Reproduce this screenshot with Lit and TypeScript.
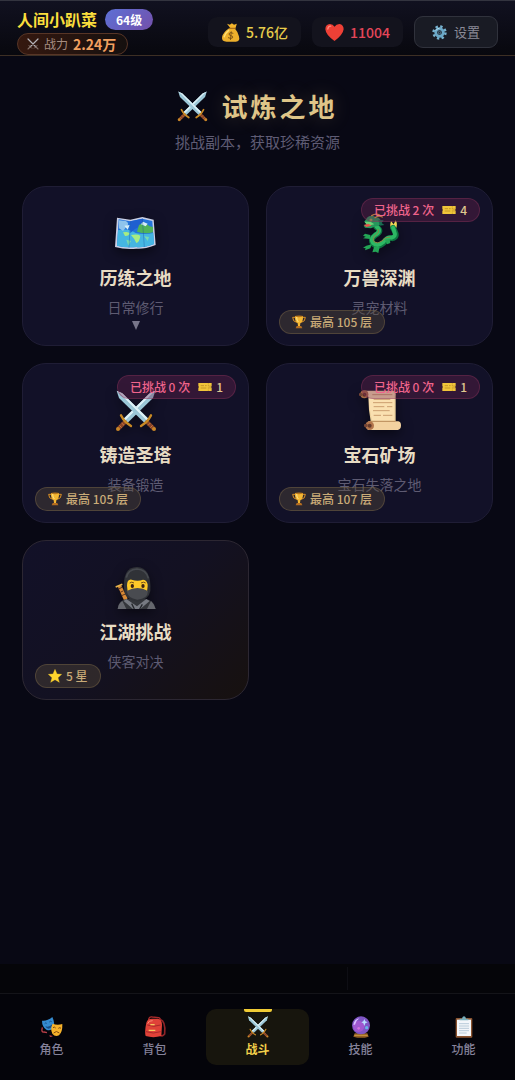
import { LitElement, html, css, svg, nothing, TemplateResult } from "lit";
import { customElement, property } from "lit/decorators.js";

/* ---------- icon drawings ---------- */

const blade = svg`
  <path d="M5 2 L22 10 L100 86 L88 98 L12 24 Z" fill="#9cc8d8"/>
  <path d="M5 2 L22 10 L100 86 L94 92 Z" fill="#dcf1f7"/>
  <path d="M12 10 L92 90" stroke="#7fb0c4" stroke-width="2"/>
  <path d="M96 96 L114 114" stroke="#8a4526" stroke-width="12" stroke-linecap="round"/>
  <path d="M99 106 l7 -7 M106 113 l7 -7" stroke="#c8763f" stroke-width="3"/>
  <path d="M78 108 Q90 100 95 95 Q101 89 108 76" stroke="#c98a24" stroke-width="7" stroke-linecap="round" fill="none"/>
  <circle cx="117" cy="117" r="6" fill="#c98628"/>`;

const drawings: Record<string, { box: string; art: TemplateResult<2> }> = {
  swords: {
    box: "0 0 126 126",
    art: svg`<g transform="translate(126 0) scale(-1 1)">${blade}</g><g>${blade}</g>`,
  },
  slimSwords: {
    box: "0 0 24 24",
    art: svg`<g fill="none" stroke-linecap="round">
      <path d="M2 2 L18 18 M22 2 L6 18" stroke="#b4b2b7" stroke-width="2.400"/>
      <path d="M14.500 20.500 L20.500 14.500 M9.500 20.500 L3.500 14.500" stroke="#84706a" stroke-width="1.600"/>
      <path d="M18 18 L22 22 M6 18 L2 22" stroke="#84706a" stroke-width="2.200"/></g>`,
  },
  map: {
    box: "0 0 126 126",
    art: svg`
      <path d="M6 14 L46 20 L82 12 L116 20 L122 96 Q84 110 64 107 Q30 110 0 102 Z" fill="#c9cfe4"/>
      <path d="M11 19 L46 25 L82 17 L112 24 L117 93 Q84 105 64 102 Q30 105 6 98 Z" fill="#2474dc"/>
      <path d="M9 52 Q40 44 62 60 Q90 66 115 60 L117 93 Q84 105 64 102 Q30 105 6 98 Z" fill="#45b6e2"/>
      <path d="M12 22 L32 24 Q44 30 36 40 L24 54 L12 46 Z" fill="#8fc4ec"/>
      <path d="M46 25 L82 17 L86 34 L60 48 L46 60 Z" fill="#1f5fd0"/>
      <path d="M72 36 Q90 26 104 40 L114 42 L114 58 Q92 64 66 56 Z" fill="#4fb35b"/>
      <path d="M84 26 L98 32 L92 40 L78 34 Z M28 38 L44 36 L38 50 Z" fill="#d5edf7"/>
      <path d="M24 58 Q42 54 44 62 Q40 70 30 69 Z M48 66 Q68 62 76 68 Q74 86 64 90 Q58 76 48 66 Z" fill="#a8ec82"/>
      <path d="M88 70 L102 72 L98 84 Z M34 80 L48 84 L40 98 Z" fill="#79dcae"/>
      <path d="M46 24 L42 104 M82 16 L88 102" stroke="#174c9a" stroke-opacity=".35" stroke-width="3"/>`,
  },
  dragon: {
    box: "0 0 126 126",
    art: svg`
      <path d="M94 46 Q92 34 96 24 L104 34 L110 22 Q118 34 110 48 Z" fill="#f0d458"/>
      <path d="M52 42 Q72 54 50 66 Q32 78 42 92 Q56 106 74 90 Q86 72 100 76 Q116 72 108 56 Q106 52 102 44"
        fill="none" stroke="#0d7440" stroke-width="17" stroke-linecap="round" stroke-linejoin="round"/>
      <path d="M52 40 Q70 54 48 66 Q32 78 42 90 Q56 102 72 88 Q84 70 98 74 Q112 70 106 56 Q104 50 102 44"
        fill="none" stroke="#2cb864" stroke-width="12" stroke-linecap="round" stroke-linejoin="round"/>
      <path d="M56 48 Q64 56 50 66 Q38 76 46 87 Q56 94 69 84 Q80 70 94 72"
        fill="none" stroke="#8c8442" stroke-width="3"/>
      <path d="M34 66 L18 62 L12 68 L20 71 L12 76 L26 77 L34 78 Z M38 94 L22 98 L12 104 L20 106 L18 112 L34 106 Z M46 100 L40 118 L50 116 L58 120 L62 102 Z M78 80 L84 94 L94 90 L92 78 Z" fill="#23a556"/>
      <path d="M24 14 Q34 4 50 12 Q66 14 66 28 Q64 40 50 40 L36 46 L18 44 L14 38 L26 32 L16 26 Z" fill="#24975b"/>
      <path d="M16 26 L34 26 L46 34 L26 38 Z" fill="#6ed177"/>
      <path d="M14 36 L28 32 L38 38 L22 42 Z" fill="#e4574c"/>
      <circle cx="36" cy="21" r="4" fill="#f6e46a"/><circle cx="36" cy="21" r="2" fill="#223"/>
      <path d="M38 8 Q50 0 62 6 M48 14 Q58 6 70 12" fill="none" stroke="#e2a63a" stroke-width="4" stroke-linecap="round"/>
      <path d="M58 20 L74 22 L68 30 L76 36 L62 38 Z" fill="#176b50"/>`,
  },
  scroll: {
    box: "0 0 126 126",
    art: svg`
      <path d="M12 2 H104 Q112 6 110 18 L110 100 H36 Q28 60 28 20 Z" fill="#ecd09c"/>
      <path d="M24 4 H102 Q108 8 106 20 L106 92 H40 Q30 60 30 22 Z" fill="#fae0b0"/>
      <path d="M40 14 H100 M44 28 H94 M42 38 H100 M44 50 H76 M84 50 H100 M42 62 H92 M44 76 H66 M72 76 H100"
        stroke="#c08f62" stroke-width="2.500"/>
      <path d="M28 94 H118 Q126 96 126 106 Q126 119 116 120 H26 Z" fill="#f3d2a0"/>
      <path d="M34 94 H110" stroke="#b98a58" stroke-width="3"/>
      <circle cx="16" cy="13" r="12" fill="#a66a45"/><circle cx="16" cy="14" r="6" fill="#5c3326"/>
      <rect x="0" y="9" width="10" height="9" rx="3" fill="#744536"/>
      <circle cx="32" cy="107" r="13" fill="#b3754c"/><circle cx="32" cy="107" r="6" fill="#643a2c"/>
      <rect x="15" y="102" width="11" height="9" rx="3" fill="#744536"/>`,
  },
  ninja: {
    box: "0 0 126 126",
    art: svg`
      <path d="M8 58 L18 54 L38 94 L28 102 Z" fill="#d88a35"/>
      <path d="M11 66 L21 61 M16 76 L26 71 M20 86 L31 81" stroke="#5b3420" stroke-width="3"/>
      <path d="M2 60 L22 52" stroke="#e6b34a" stroke-width="5"/>
      <path d="M8 126 Q10 98 38 96 L90 96 Q118 100 122 126 Z" fill="#34363b"/>
      <path d="M8 126 Q10 110 22 102 L34 126 Z M122 126 Q118 110 108 102 L96 126 Z" fill="#65676e"/>
      <path d="M28 74 Q20 0 66 0 Q110 2 106 72 Q102 98 66 104 Q32 98 28 74 Z" fill="#303237"/>
      <path d="M34 32 Q38 8 66 6 Q94 8 100 34" fill="none" stroke="#46494f" stroke-width="5"/>
      <path d="M36 56 Q36 36 50 38 Q68 44 84 38 Q98 38 98 58 L96 74 H38 Z" fill="#fdc928"/>
      <ellipse cx="52" cy="57" rx="5" ry="6" fill="#3b2414"/><ellipse cx="84" cy="57" rx="5" ry="6" fill="#3b2414"/>
      <path d="M44 48 Q50 43 57 48 M78 48 Q86 43 92 48" fill="none" stroke="#765018" stroke-width="3"/>
      <path d="M35 72 Q68 54 99 72 Q98 96 67 98 Q38 94 35 72 Z" fill="#494b50"/>
      <path d="M34 96 L66 118 L94 96 L104 102 L76 126 H54 L26 102 Z" fill="#777a82"/>
      <path d="M50 110 L58 126 M82 112 L74 126" stroke="#25272b" stroke-width="4"/>`,
  },
  bag: {
    box: "0 0 54 54",
    art: svg`
      <path d="M17 2 L25 5 L31 1 L37 5 L45 2 L41 15 H27 Z" fill="#f3b52b"/>
      <path d="M23 15 Q6 26 3 40 Q1 53 16 53 H42 Q55 53 51 38 Q48 25 39 15 Z" fill="#edb02c"/>
      <path d="M22 21 Q12 29 9 39" stroke="#ffdf72" stroke-width="4" fill="none" stroke-linecap="round"/>
      <path d="M24 15 H41" stroke="#a66a19" stroke-width="3" stroke-linecap="round"/>
      <path d="M34 29 Q26 25 23 30 Q22 35 28 36 Q35 37 33 42 Q29 46 21 42 M29 25 L27 47" stroke="#714912" stroke-width="2.500" fill="none" stroke-linecap="round"/>`,
  },
  heart: {
    box: "0 0 54 50",
    art: svg`<path d="M27 49 Q2 32 1 16 Q1 2 14 1 Q23 1 27 9 Q32 1 41 1 Q53 3 53 16 Q51 32 27 49 Z" fill="#ee4036"/>
      <path d="M8 15 Q9 7 16 7" fill="none" stroke="#ff887b" stroke-width="4" stroke-linecap="round"/>`,
  },
  gear: {
    box: "0 0 48 48",
    art: svg`<circle cx="24" cy="24" r="19" fill="none" stroke="#78b3d0" stroke-width="8" stroke-dasharray="7.460 7.460"/>
      <circle cx="24" cy="24" r="12" fill="none" stroke="#6ba8c7" stroke-width="9"/>
      <circle cx="24" cy="24" r="5" fill="#5b879f"/><circle cx="24" cy="24" r="3" fill="#1c2531"/>
      <path d="M12 18 Q16 11 24 10" fill="none" stroke="#b9dfee" stroke-width="3"/>`,
  },
  ticket: {
    box: "0 0 42 30",
    art: svg`<path d="M1 3 H41 V11 Q38 15 41 19 V27 H1 V19 Q4 15 1 11 Z" fill="#f1c53a"/>
      <path d="M31 4 V26" stroke="#9b6b1a" stroke-width="1.500" stroke-dasharray="3 2"/>
      <path d="M8 11 H18 M8 18 H25 M21 11 H26 M36 10 V20" stroke="#b07f22" stroke-width="2"/>`,
  },
  trophy: {
    box: "0 0 42 42",
    art: svg`<path d="M9 7 H2 Q2 20 14 22 M33 7 H40 Q40 20 28 22" fill="none" stroke="#dc9125" stroke-width="3"/>
      <path d="M9 3 H33 Q34 20 25 25 L24 33 H18 L17 25 Q8 20 9 3 Z" fill="#f4b733"/>
      <path d="M14 6 Q14 17 19 21" stroke="#ffe58b" stroke-width="3" fill="none"/>
      <path d="M14 33 H28 L31 40 H11 Z" fill="#b66e20"/><ellipse cx="21" cy="4" rx="12" ry="2.500" fill="#b8771d"/>`,
  },
  star: {
    box: "0 0 42 42",
    art: svg`<path d="M21 1 L27 15 L41 16 L30 26 L34 40 L21 32 L8 40 L12 26 L1 16 L15 15 Z" fill="#ffd52d" stroke="#ffd52d" stroke-linejoin="round"/>`,
  },
  masks: {
    box: "0 0 66 66",
    art: svg`
      <path d="M4 34 Q0 50 9 48 L18 50 M28 58 Q26 63 34 60" fill="none" stroke="#b83f48" stroke-width="4"/>
      <path d="M3 14 Q18 16 34 3 Q43 22 37 36 Q28 47 16 41 Q3 32 3 14 Z" fill="#358bd0"/>
      <path d="M11 23 Q14 19 17 22 M25 18 Q28 14 32 17" fill="none" stroke="#174c83" stroke-width="3"/>
      <path d="M13 31 Q24 35 34 25 Q32 38 22 38 Q15 37 13 31 Z" fill="#174c83"/>
      <path d="M35 23 Q49 29 64 24 Q65 48 54 58 Q42 64 34 53 Q27 38 35 23 Z" fill="#f6b22a"/>
      <path d="M36 35 Q40 31 44 36 M52 37 Q57 33 60 37 M38 51 Q46 42 55 51" fill="none" stroke="#7d4b13" stroke-width="3"/>`,
  },
  backpack: {
    box: "0 0 66 66",
    art: svg`
      <path d="M14 12 Q14 1 25 3 L44 5 Q50 7 48 13" fill="none" stroke="#a92b2b" stroke-width="4"/>
      <path d="M48 10 Q66 16 62 54 Q54 64 48 56" fill="none" stroke="#8f2428" stroke-width="5"/>
      <path d="M7 20 Q10 7 26 8 H42 Q54 10 54 26 L52 60 Q28 67 5 60 Q1 48 7 20 Z" fill="#df4238"/>
      <path d="M11 23 Q14 13 26 14" stroke="#ff8a75" stroke-width="3" fill="none"/>
      <path d="M10 27 Q28 35 50 27 M6 47 Q28 55 50 47" stroke="#a72a2a" stroke-width="3" fill="none"/>
      <path d="M19 26 H32 M14 43 H34" stroke="#f4c95e" stroke-width="4"/>`,
  },
  orb: {
    box: "0 0 66 66",
    art: svg`
      <path d="M14 52 H52 L56 62 Q33 69 10 62 Z" fill="#936024"/><path d="M13 58 H53" stroke="#c99843" stroke-width="3"/>
      <circle cx="33" cy="28" r="27" fill="#7f55c4"/><circle cx="26" cy="31" r="17" fill="#a158d0"/>
      <path d="M10 26 Q13 10 28 7 Q18 14 15 26 Z" fill="#d9bfff"/>
      <path d="M43 9 L46 16 L53 19 L46 22 L43 30 L40 22 L34 19 L40 16 Z" fill="#b8dcff"/>
      <circle cx="50" cy="35" r="5" fill="#67b2e7"/><circle cx="26" cy="37" r="4" fill="#d273df"/>`,
  },
  clipboard: {
    box: "0 0 66 66",
    art: svg`
      <rect x="8" y="6" width="50" height="59" rx="3" fill="#8b5430"/>
      <path d="M12 11 H54 V60 H12 Z" fill="#f3f6fa"/>
      <path d="M18 23 H48 M18 30 H48 M18 37 H48 M18 44 H48 M18 51 H41" stroke="#9cb5c8" stroke-width="2"/>
      <path d="M20 13 V8 H27 Q28 1 33 1 Q38 1 39 8 H46 V13 Z" fill="#78aebb"/>`,
  },
};

@customElement("game-icon")
class GameIcon extends LitElement {
  static styles = css`
    :host { display: inline-flex; flex: none; width: 1em; height: 1em; }
    svg { width: 100%; height: 100%; overflow: visible; }
  `;
  @property() name = "swords";

  render() {
    const d = drawings[this.name];
    return html`<svg viewBox=${d.box} aria-hidden="true">${d.art}</svg>`;
  }
}

/* ---------- dungeon card ---------- */

interface Dungeon {
  icon: string;
  title: string;
  desc: string;
  tries?: number;
  tickets?: number;
  record?: string;
  recordIcon?: string;
  expandable?: boolean;
  warm?: boolean;
}

@customElement("dungeon-card")
class DungeonCard extends LitElement {
  static styles = css`
    :host { display: block; }
    .card {
      position: relative;
      display: flex;
      flex-direction: column;
      align-items: center;
      box-sizing: border-box;
      width: 100%;
      min-height: 160px;
      margin: 0;
      padding: 26px 12px 12px;
      border: 1px solid #1f1d35;
      border-radius: 24px;
      background: #121128;
      font: inherit;
      color: inherit;
      cursor: pointer;
    }
    .warm {
      border-color: #2c2732;
      background: linear-gradient(135deg, #121128 0%, #131122 50%, #17110f 100%);
    }
    .art { font-size: 42px; filter: drop-shadow(0 4px 6px rgba(0, 0, 0, 0.5)); }
    .title { margin-top: 8px; font-size: 18px; line-height: 28px; font-weight: 700; color: #e8dcc4; }
    .desc { margin-top: 4px; font-size: 14px; line-height: 24px; color: #5e5b72; }
    .arrow {
      width: 0;
      height: 0;
      margin-top: 2px;
      border: 4px solid transparent;
      border-top: 9px solid #77758a;
      border-bottom: 0;
    }
    .badge {
      position: absolute;
      display: flex;
      align-items: center;
      gap: 4px;
      padding: 0 12px;
      border: 1px solid;
      border-radius: 12px;
      font-size: 12px;
      line-height: 22px;
      font-weight: 500;
      white-space: nowrap;
    }
    .top { top: 11px; right: 12px; color: #f0648c; background: rgba(110, 35, 80, 0.36); border-color: rgba(150, 55, 95, 0.35); }
    .bottom { bottom: 11px; left: 12px; color: #c9ab78; background: rgba(88, 75, 58, 0.4); border-color: rgba(130, 110, 75, 0.4); }
    .badge game-icon { font-size: 14px; }
    .ticket { margin-left: 4px; }
    .count { color: #e0c890; }
  `;
  @property({ attribute: false }) data!: Dungeon;

  render() {
    const d = this.data;
    return html`<button class="card ${d.warm ? "warm" : ""}" type="button">
      <game-icon class="art" name=${d.icon}></game-icon>
      <span class="title">${d.title}</span>
      <span class="desc">${d.desc}</span>
      ${d.expandable ? html`<span class="arrow"></span>` : nothing}
      ${d.tickets !== undefined
        ? html`<span class="badge top"><span>已挑战 ${d.tries} 次</span><game-icon class="ticket" name="ticket"></game-icon><span class="count">${d.tickets}</span></span>`
        : nothing}
      ${d.record
        ? html`<span class="badge bottom"><game-icon name=${d.recordIcon ?? "trophy"}></game-icon><span>${d.record}</span></span>`
        : nothing}
    </button>`;
  }
}

/* ---------- page ---------- */

const dungeons: Dungeon[] = [
  { icon: "map", title: "历练之地", desc: "日常修行", expandable: true },
  { icon: "dragon", title: "万兽深渊", desc: "灵宠材料", tries: 2, tickets: 4, record: "最高 105 层" },
  { icon: "swords", title: "铸造圣塔", desc: "装备锻造", tries: 0, tickets: 1, record: "最高 105 层" },
  { icon: "scroll", title: "宝石矿场", desc: "宝石失落之地", tries: 0, tickets: 1, record: "最高 107 层" },
  { icon: "ninja", title: "江湖挑战", desc: "侠客对决", record: "5 星", recordIcon: "star", warm: true },
];

const tabs = [
  { icon: "masks", label: "角色" },
  { icon: "backpack", label: "背包" },
  { icon: "swords", label: "战斗", active: true },
  { icon: "orb", label: "技能" },
  { icon: "clipboard", label: "功能" },
];

@customElement("app-root")
class AppRoot extends LitElement {
  static styles = css`
    :host {
      display: flex;
      flex-direction: column;
      min-height: 100vh;
      background: #080814;
      color: #e8dcc4;
      font-family: "Noto Sans CJK SC", sans-serif;
    }
    .header {
      display: flex;
      align-items: center;
      justify-content: space-between;
      gap: 8px;
      box-sizing: border-box;
      height: 56px;
      padding: 0 17px;
      border-top: 1px solid #33343f;
      border-bottom: 1px solid #3d2f24;
      background: linear-gradient(180deg, #111120, #08080e);
      white-space: nowrap;
    }
    .player { display: flex; flex-direction: column; align-items: flex-start; gap: 3px; padding-top: 8px; }
    .identity { display: flex; align-items: center; gap: 8px; }
    .name { font-size: 16px; line-height: 21px; font-weight: 700; color: #fade3c; }
    .level {
      padding: 0 11px;
      border-radius: 11px;
      background: linear-gradient(135deg, #5c70d6, #7450aa);
      color: #fff;
      font-size: 12px;
      line-height: 21px;
      font-weight: 700;
    }
    .power {
      display: flex;
      align-items: center;
      gap: 5px;
      padding: 0 11px 0 9px;
      border: 1px solid #573526;
      border-radius: 11px;
      background: linear-gradient(90deg, #35180f, #15100f);
      font-size: 12px;
      line-height: 20px;
      color: #a58c80;
    }
    .power b { font-size: 14px; color: #f2a060; }
    .stats { display: flex; align-items: center; gap: 11px; padding-top: 8px; }
    .stat, .settings {
      display: flex;
      align-items: center;
      gap: 7px;
      padding: 0 13px;
      border-radius: 9px;
      background: #13131d;
      font-size: 14px;
      line-height: 30px;
      font-weight: 500;
    }
    .stat { gap: 6px; }
    .stat game-icon { font-size: 19px; }
    .gold { color: #e8cd4b; }
    .life { color: #e44659; }
    .settings {
      margin: 0;
      padding: 0 17px;
      border: 1px solid #30323c;
      background: #191b24;
      font-family: inherit;
      font-size: 13px;
      font-weight: 400;
      color: #8a8a96;
      cursor: pointer;
    }
    .settings game-icon { font-size: 15px; }
    .main { flex: 1; padding: 31px 22px 32px; }
    .heading {
      display: flex;
      align-items: center;
      justify-content: center;
      gap: 13px;
      margin: 0;
      font-size: 26px;
      line-height: 38px;
      letter-spacing: 3px;
      color: #dfc588;
      text-shadow: 0 0 20px rgba(230, 200, 120, 0.2);
    }
    .heading game-icon { font-size: 31px; }
    .sub { margin: 5px 0 32px; text-align: center; font-size: 15px; line-height: 24px; color: #5f5c74; }
    .grid { display: grid; grid-template-columns: 1fr 1fr; gap: 17px; }
    .strip { display: flex; height: 29px; padding: 3px 0; box-sizing: border-box; background: #050509; }
    .slot { flex: 347; border-right: 1px solid #0e0e14; }
    .rest { flex: 167; }
    .nav { display: grid; grid-template-columns: repeat(5, 1fr); padding: 15px 0; border-top: 1px solid #141419; background: #04040a; }
    .tab {
      position: relative;
      display: flex;
      flex-direction: column;
      align-items: center;
      gap: 2px;
      margin: 0;
      padding: 7px 0;
      border: 0;
      border-radius: 10px;
      background: none;
      font-family: inherit;
      font-size: 12px;
      line-height: 18px;
      font-weight: 500;
      color: #85829a;
      cursor: pointer;
    }
    .tab game-icon { font-size: 22px; }
    .active { background: #17150d; color: #f2d04a; font-weight: 700; }
    .active::before {
      content: "";
      position: absolute;
      top: 0;
      left: 50%;
      width: 28px;
      height: 3px;
      margin-left: -14px;
      border-radius: 0 0 2px 2px;
      background: #f0cb35;
    }
  `;

  render() {
    return html`
      <header class="header">
        <div class="player">
          <div class="identity"><span class="name">人间小趴菜</span><span class="level">64级</span></div>
          <div class="power"><game-icon name="slimSwords"></game-icon><span>战力</span><b>2.24万</b></div>
        </div>
        <div class="stats">
          <div class="stat gold"><game-icon name="bag"></game-icon><span>5.76亿</span></div>
          <div class="stat life"><game-icon name="heart"></game-icon><span>11004</span></div>
          <button class="settings" type="button"><game-icon name="gear"></game-icon><span>设置</span></button>
        </div>
      </header>
      <main class="main">
        <h1 class="heading"><game-icon name="swords"></game-icon><span>试炼之地</span></h1>
        <p class="sub">挑战副本，获取珍稀资源</p>
        <div class="grid">${dungeons.map((d) => html`<dungeon-card .data=${d}></dungeon-card>`)}</div>
      </main>
      <div class="strip"><span class="slot"></span><span class="rest"></span></div>
      <nav class="nav">
        ${tabs.map(
          (t) => html`<button class="tab ${t.active ? "active" : ""}" type="button" aria-current=${t.active ? "page" : nothing}>
            <game-icon name=${t.icon}></game-icon><span>${t.label}</span>
          </button>`
        )}
      </nav>
    `;
  }
}
